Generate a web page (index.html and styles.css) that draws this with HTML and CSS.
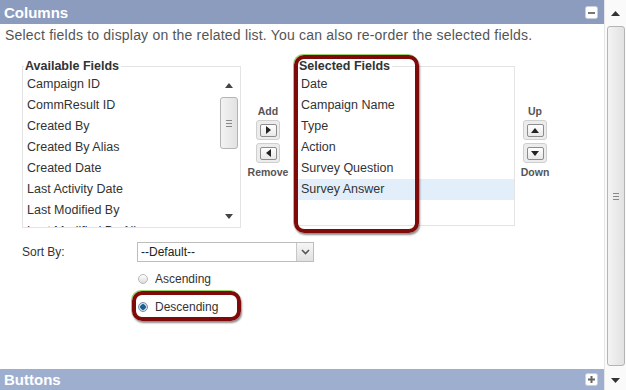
FILE: index.html
```html
<!DOCTYPE html>
<html lang="en">
  <head>
    <meta charset="UTF-8" />
    <title>Columns</title>
    <link rel="stylesheet" href="styles.css">
  </head>
  <body>
    <div class="page">
      <div class="main">
        <div class="section-head">
          <span>Columns</span>
          <span class="toggle">
            <svg width="13" height="13" viewBox="0 0 13 13"><rect x="0.5" y="0.5" width="12" height="12" rx="2" fill="#fff" stroke="#c8cfdf"/><rect x="3" y="6" width="7" height="2" fill="#777"/></svg>
          </span>
        </div>

        <p class="intro">Select fields to display on the related list. You can also re-order the selected fields.</p>

        <div class="fields">
          <fieldset class="picklist available">
            <legend>Available Fields</legend>
            <div class="pick-body">
              <ul class="options">
                <li>Campaign ID</li>
                <li>CommResult ID</li>
                <li>Created By</li>
                <li>Created By Alias</li>
                <li>Created Date</li>
                <li>Last Activity Date</li>
                <li>Last Modified By</li>
                <li>Last Modified By Alias</li>
              </ul>
              <div class="mini-scroll">
                <svg class="arr" width="8" height="5" viewBox="0 0 8 5"><path d="M0 5 L4 0 L8 5 Z" fill="#444"/></svg>
                <div class="thumb"><span class="grip"></span></div>
                <div class="track"></div>
                <svg class="arr" width="8" height="5" viewBox="0 0 8 5"><path d="M0 0 L8 0 L4 5 Z" fill="#444"/></svg>
              </div>
            </div>
          </fieldset>

          <div class="movers">
            <span class="mover-label">Add</span>
            <button class="arrow-btn"><span class="arrow-in"><svg width="5" height="8" viewBox="0 0 5 8"><path d="M0 0 L5 4 L0 8 Z" fill="#222"/></svg></span></button>
            <button class="arrow-btn"><span class="arrow-in"><svg width="5" height="8" viewBox="0 0 5 8"><path d="M5 0 L0 4 L5 8 Z" fill="#222"/></svg></span></button>
            <span class="mover-label">Remove</span>
          </div>

          <div class="selected-wrap">
            <fieldset class="picklist selected">
              <legend>Selected Fields</legend>
              <ul class="options">
                <li>Date</li>
                <li>Campaign Name</li>
                <li>Type</li>
                <li>Action</li>
                <li>Survey Question</li>
                <li class="current">Survey Answer</li>
              </ul>
            </fieldset>
            <div class="callout callout-list"></div>
          </div>

          <div class="movers up-down">
            <span class="mover-label">Up</span>
            <button class="arrow-btn"><span class="arrow-in"><svg width="8" height="5" viewBox="0 0 8 5"><path d="M0 5 L4 0 L8 5 Z" fill="#222"/></svg></span></button>
            <button class="arrow-btn"><span class="arrow-in"><svg width="8" height="5" viewBox="0 0 8 5"><path d="M0 0 L8 0 L4 5 Z" fill="#222"/></svg></span></button>
            <span class="mover-label">Down</span>
          </div>
        </div>

        <div class="sort">
          <div class="sort-row">
            <span class="sort-label">Sort By:</span>
            <div class="select">
              <span class="select-text">--Default--</span>
              <span class="select-arrow">
                <svg width="9" height="6" viewBox="0 0 9 6"><path d="M1 1 L4.5 4.5 L8 1" fill="none" stroke="#555" stroke-width="1.6"/></svg>
              </span>
            </div>
          </div>
          <label class="radio"><span class="dot"></span>Ascending</label>
          <div class="desc-wrap">
            <label class="radio"><span class="dot checked"></span>Descending</label>
            <div class="callout callout-radio"></div>
          </div>
        </div>

        <div class="section-head buttons-head">
          <span>Buttons</span>
          <span class="toggle">
            <svg width="13" height="13" viewBox="0 0 13 13"><rect x="0.5" y="0.5" width="12" height="12" rx="2" fill="#fff" stroke="#c8cfdf"/><rect x="3" y="5.5" width="7" height="2" fill="#666"/><rect x="5.5" y="3" width="2" height="7" fill="#666"/></svg>
          </span>
        </div>
      </div>

      <div class="page-scroll">
        <svg class="arr" width="9" height="5" viewBox="0 0 9 5"><path d="M0 5 L4.5 0 L9 5 Z" fill="#333"/></svg>
        <div class="thumb"><span class="grip"></span></div>
        <svg class="arr" width="9" height="5" viewBox="0 0 9 5"><path d="M0 0 L9 0 L4.5 5 Z" fill="#333"/></svg>
      </div>
    </div>
  </body>
</html>
```

FILE: styles.css
```css
* {
  box-sizing: border-box;
}

body {
  margin: 0;
  font-family: "Liberation Sans", Arial, sans-serif;
  background: #fff;
  color: #333;
}

.page {
  display: flex;
  width: 626px;
  height: 390px;
  overflow: hidden;
}

.main {
  flex: 1;
  display: flex;
  flex-direction: column;
}

.section-head {
  height: 24px;
  padding: 0 5px 0 4px;
  display: flex;
  align-items: center;
  justify-content: space-between;
  background: #8c9cbf;
  color: #fff;
  font-weight: bold;
  font-size: 15px;
}

.toggle svg {
  display: block;
  margin-right: 1px;
}

.buttons-head {
  margin-top: auto;
  height: 21px;
  background: #9eaecf;
}

.intro {
  margin: 0;
  padding: 3px 5px 0;
  font-size: 14px;
  letter-spacing: 0.2px;
  line-height: 17px;
  color: #555;
}

/* field pickers */
.fields {
  display: flex;
  align-items: flex-start;
  padding-left: 22px;
  margin-top: 16px;
}

.picklist {
  margin: 0;
  padding: 0;
  border: 1px solid #e4e4e4;
  height: 168px;
}

.picklist legend {
  padding: 0 2px 0 1px;
  margin-left: 1px;
  font-size: 12.5px;
  font-weight: bold;
  line-height: 12px;
  color: #333;
}

.available {
  width: 219px;
}

.pick-body {
  display: flex;
  height: 155px;
  padding-top: 2px;
}

.options {
  list-style: none;
  margin: 0;
  padding: 0;
  flex: 1;
  overflow: hidden;
  font-size: 12.5px;
}

.options li {
  height: 21px;
  line-height: 21px;
  padding-left: 4px;
  white-space: nowrap;
}

.options li.current {
  background: #e2effb;
}

.mini-scroll {
  width: 20px;
  margin-right: 1px;
  display: flex;
  flex-direction: column;
  align-items: center;
  padding: 9px 0 8px;
}

.mini-scroll .arr {
  display: block;
}

.mini-scroll .thumb {
  margin-top: 9px;
  width: 18px;
  height: 52px;
}

.mini-scroll .track {
  flex: 1;
}

.thumb {
  border: 1px solid #b4b4b4;
  border-radius: 3px;
  background: linear-gradient(to right, #f3f3f3, #e2e2e2);
  display: flex;
  align-items: center;
  justify-content: center;
}

.grip {
  width: 6px;
  height: 7px;
  border-top: 1px solid #888;
  border-bottom: 1px solid #888;
  position: relative;
}

.grip::after {
  content: "";
  position: absolute;
  left: 0;
  right: 0;
  top: 2px;
  border-top: 1px solid #888;
}

/* add / remove, up / down */
.movers {
  width: 40px;
  margin: 45px 0 0 7px;
  display: flex;
  flex-direction: column;
  align-items: center;
  gap: 3px;
}

.up-down {
  width: 28px;
  margin-left: 6px;
}

.mover-label {
  font-size: 10.5px;
  font-weight: bold;
  color: #555;
  line-height: 12px;
}

.arrow-btn {
  width: 24px;
  height: 20px;
  padding: 0;
  border: 1px solid #cfcfcf;
  border-radius: 3px;
  background: #ececec;
  display: flex;
  align-items: center;
  justify-content: center;
}

.arrow-in {
  width: 17px;
  height: 13px;
  border: 1px solid #8d8d8d;
  border-radius: 2px;
  background: linear-gradient(#fff, #e8e8e8);
  display: flex;
  align-items: center;
  justify-content: center;
}

.arrow-in svg {
  display: block;
}

.selected-wrap {
  position: relative;
  margin-left: 8px;
}

.selected {
  width: 219px;
  height: 166px;
}

.selected .options {
  margin-top: 2px;
}

.callout {
  position: absolute;
  border: 4px solid #7e0a0a;
  border-radius: 10px;
  box-shadow: 1px 2px 2px rgba(0, 0, 0, 0.45), -1px -1px 0 #9bd36a;
}

.callout-list {
  left: -2px;
  top: -5px;
  width: 125px;
  height: 178px;
}

/* sort */
.sort {
  padding-left: 22px;
  margin-top: 14px;
  font-size: 12px;
}

.sort-row {
  display: flex;
  align-items: center;
  height: 20px;
}

.sort-label {
  width: 115px;
  color: #333;
}

.select {
  display: flex;
  width: 177px;
  height: 20px;
  border: 1px solid #bdbdbd;
}

.select-text {
  flex: 1;
  padding-left: 3px;
  line-height: 18px;
  color: #222;
}

.select-arrow {
  width: 17px;
  border-left: 1px solid #c8c8c8;
  background: linear-gradient(#f6f6f6, #e0e0e0);
  display: flex;
  align-items: center;
  justify-content: center;
}

.radio {
  display: flex;
  align-items: center;
  gap: 7px;
  margin-left: 116px;
  height: 20px;
  color: #333;
}

.sort > .radio {
  margin-top: 7px;
}

.desc-wrap {
  position: relative;
  margin-top: 8px;
}

.dot {
  width: 10px;
  height: 10px;
  border-radius: 50%;
  border: 1px solid #b9b9b9;
  background: linear-gradient(#fff, #dcdcdc);
}

.dot.checked {
  border-color: #7a8fa6;
  background: radial-gradient(circle, #1b5e95 0 2.5px, #cfd9e4 3px);
}

.callout-radio {
  left: 110px;
  top: -6px;
  width: 109px;
  height: 30px;
}

/* page scrollbar */
.page-scroll {
  width: 22px;
  border-left: 1px solid #e6e6e6;
  background: #fafafa;
  display: flex;
  flex-direction: column;
  align-items: center;
  padding: 11px 0 7px;
}

.page-scroll .thumb {
  margin: 10px 0 12px;
  width: 18px;
  flex: 1;
}

.page-scroll .arr {
  display: block;
}
```
